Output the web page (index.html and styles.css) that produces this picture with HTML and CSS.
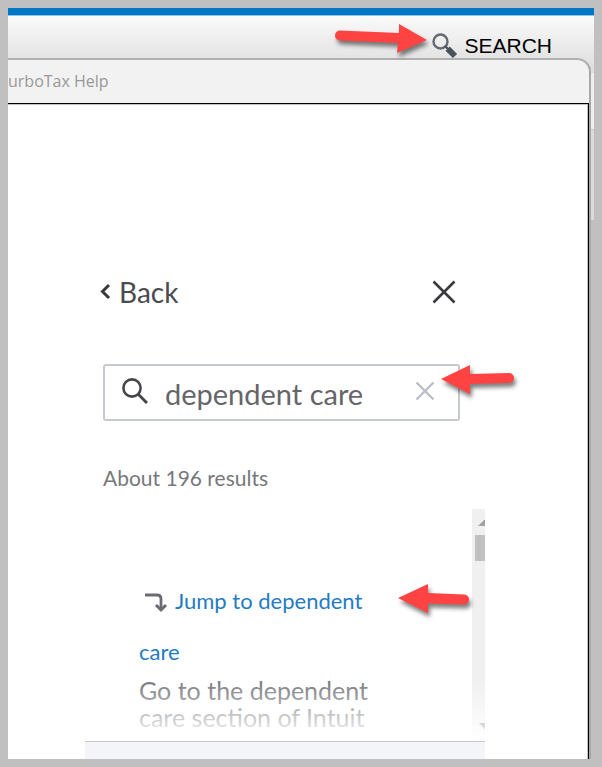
FILE: index.html
```html
<!DOCTYPE html>
<html lang="en-US">
  <head>
    <title>TurboTax Help</title>
    <meta charset="utf-8" />
    <meta name="viewport" content="width=device-width, initial-scale=1" />
    <link rel="stylesheet" href="styles.css">
  </head>
  <body>
    <div class="app">
      <header class="topbar">
        <svg class="arrow" width="94" height="32" viewBox="0 0 94 32">
          <path d="M5 7.5 L64 10 V1 L92 17 L62 30 L63 20 L5 17.5 A5 5 0 0 1 5 7.5Z" />
        </svg>
        <a class="searchLink" href="#query">
          <svg width="26" height="26" viewBox="0 0 26 26">
            <circle cx="8.5" cy="8.5" r="7" fill="none" stroke="#626972" stroke-width="2.4" />
            <path d="M13 13 L16 16" stroke="#4a525c" stroke-width="2.4" />
            <path d="M15.6 15.6 L23 23" stroke="#4a525c" stroke-width="6" />
          </svg>
          SEARCH
        </a>
      </header>
      <main class="window">
        <h1 class="titlebar">urboTax Help</h1>
        <div class="content">
          <section class="panel">
            <div class="panelTop">
              <button class="back" type="button">
                <svg width="12" height="18" viewBox="0 0 12 18">
                  <path d="M10 2 L3.5 8.5 L10 15" fill="none" stroke="#393a3d" stroke-width="3" />
                </svg>
                Back
              </button>
              <button class="close" type="button" aria-label="Close">
                <svg width="24" height="24" viewBox="0 0 24 24">
                  <path d="M1.5 1.5 L22.5 22.5 M22.5 1.5 L1.5 22.5" stroke="#393a3d" stroke-width="2.6" />
                </svg>
              </button>
            </div>
            <div class="searchBox">
              <label for="query" aria-label="Search help">
                <svg width="26" height="26" viewBox="0 0 26 26">
                  <circle cx="10" cy="10" r="8.6" fill="none" stroke="#45464a" stroke-width="2.6" />
                  <path d="M16 16 L25 25" stroke="#45464a" stroke-width="3" />
                </svg>
              </label>
              <input id="query" type="text" value="dependent care" />
              <button class="clear" type="button" aria-label="Clear">
                <svg width="20" height="20" viewBox="0 0 20 20">
                  <path d="M1.5 1.5 L18.5 18.5 M18.5 1.5 L1.5 18.5" stroke="#babec5" stroke-width="2.4" />
                </svg>
              </button>
              <svg class="arrow arrowClear" width="75" height="32" viewBox="0 0 75 32">
                <path d="M1 15 L30 1 V10 L69 9 A5 5 0 0 1 69 19 L30 20 V30Z" />
              </svg>
            </div>
            <p class="count">About 196 results</p>
            <div class="results">
              <article class="result">
                <a href="#">
                  <svg width="24" height="20" viewBox="0 0 24 20">
                    <path d="M0 2 H12 Q16 2 16 6 V16" fill="none" stroke="#6b6c72" stroke-width="2.8" />
                    <path d="M11 12 L16 17 L21 12" fill="none" stroke="#6b6c72" stroke-width="3" />
                  </svg>Jump to dependent care</a>
                <p>Go to the dependent care section of Intuit</p>
              </article>
              <svg class="arrow arrowResult" width="73" height="32" viewBox="0 0 73 32">
                <path d="M1 15 L31 1 V10 L67 11.5 A5 5 0 0 1 67 21.5 L31 20.5 V30Z" />
              </svg>
              <div class="scrollbar">
                <svg width="13" height="26" viewBox="0 0 13 26">
                  <path d="M6 17 L12 11 H13 V17Z" fill="#a3a3a3" />
                </svg>
                <div class="thumb"></div>
                <svg class="down" width="13" height="16" viewBox="0 0 13 16">
                  <path d="M7 4 H13 V10 H12Z" fill="#777777" />
                </svg>
              </div>
              <div class="fade"></div>
            </div>
            <div class="panelFooter"></div>
          </section>
        </div>
      </main>
    </div>
  </body>
</html>
```
FILE: styles.css
```css
* {
  margin: 0;
  padding: 0;
  box-sizing: border-box;
}

body {
  background-color: #c0c0c0;
  padding: 8px;
  font-family: Lato, "Liberation Sans", sans-serif;
  color: #4a4b4f;
}

button {
  border: none;
  background: none;
  font-family: inherit;
  color: inherit;
}

svg {
  display: block;
  flex-shrink: 0;
}

/* page behind the help window */
.app {
  display: flex;
  flex-direction: column;
  height: calc(100vh - 16px);
  overflow: hidden;
  background: linear-gradient(#eeeeee 121px, #cccccc 121px, #cccccc 122px, #dcdcdc 122px, #dcdcdc 212px, #c0c0c0 212px);
}

.topbar {
  display: flex;
  justify-content: flex-end;
  align-items: flex-start;
  gap: 3px;
  height: 65px;
  flex-shrink: 0;
  padding: 8px 42px 0 0;
  border-top: 7px solid #0077c5;
  background: linear-gradient(#8cc4ee 1px, #fafafa 1px, #dcdcdc);
}

.searchLink {
  display: flex;
  align-items: center;
  gap: 6px;
  padding-top: 10px;
  font-family: "Liberation Sans", sans-serif;
  font-size: 21px;
  line-height: 26px;
  color: black;
  text-decoration: none;
}

.arrow {
  fill: #ff4343;
  overflow: visible;
  filter: drop-shadow(2px 4px 2px rgba(0, 0, 0, 0.5));
}

/* help window */
.window {
  display: flex;
  flex-direction: column;
  flex: 1;
  margin: -15px 3px 0 0;
  border-top: 2px solid #b1b1b1;
  border-right: 2px solid #a8a8a8;
  border-top-right-radius: 14px;
  background-color: #f2f2f2;
  overflow: hidden;
}

.titlebar {
  height: 43px;
  flex-shrink: 0;
  font-family: "Open Sans", sans-serif;
  font-size: 16px;
  font-weight: normal;
  line-height: 42px;
  color: #999999;
}

.content {
  display: flex;
  flex: 1;
  border-top: 1px solid black;
  border-right: 1px solid black;
  background-color: white;
  box-shadow: inset -1px 1px #c4c4c4;
  padding: 0 103px 0 77px;
}

.panel {
  display: flex;
  flex-direction: column;
  flex: 1;
  min-width: 0;
  padding-top: 168px;
}

.panelTop {
  display: flex;
  justify-content: space-between;
  align-items: center;
  height: 40px;
  padding: 0 29px 0 14px;
}

.back {
  display: flex;
  align-items: center;
  gap: 8px;
  font-size: 28px;
  line-height: 40px;
}

.searchBox {
  display: flex;
  align-items: center;
  position: relative;
  height: 57px;
  margin: 52px 25px 0 18px;
  padding: 0 23px 0 17px;
  border: 2px solid #c6c9d0;
  border-radius: 3px;
}

.searchBox label {
  margin-bottom: 4px;
}

.searchBox input {
  flex: 1;
  min-width: 0;
  margin: 2px 16px 0 17px;
  border: none;
  outline: none;
  background: none;
  font-family: inherit;
  font-size: 29px;
  color: #65666a;
}

.clear {
  margin-bottom: 4px;
}

.arrowClear {
  position: absolute;
  top: -2px;
  right: -57px;
}

.count {
  margin: 43px 0 17px 18px;
  font-size: 21px;
  line-height: 28px;
  color: #77787d;
}

.results {
  position: relative;
  display: flex;
  justify-content: space-between;
  flex: 1;
  min-height: 0;
  overflow: hidden;
}

.result {
  width: 310px;
  padding: 66px 0 0 54px;
}

.result a {
  display: block;
  font-size: 22px;
  line-height: 51px;
  color: #1f7cc4;
  text-decoration: none;
}

.result a svg {
  display: inline-block;
  vertical-align: middle;
  margin: 0 6px;
}

.result p {
  font-size: 25px;
  line-height: 27px;
  color: #77787d;
}

.arrowResult {
  position: absolute;
  top: 74px;
  right: 15px;
  z-index: 1;
}

.scrollbar {
  display: flex;
  flex-direction: column;
  width: 13px;
  background-color: #f0f0f0;
}

.thumb {
  height: 26px;
  margin-left: 3px;
  background-color: #c1c1c1;
}

.down {
  margin-top: auto;
  margin-bottom: 6px;
}

.fade {
  position: absolute;
  left: 0;
  right: 0;
  bottom: 0;
  height: 61px;
  background: linear-gradient(rgba(255, 255, 255, 0), white);
}

.panelFooter {
  height: 18px;
  border-top: 1px solid #c8cacc;
  background-color: #f4f5f8;
}
```
